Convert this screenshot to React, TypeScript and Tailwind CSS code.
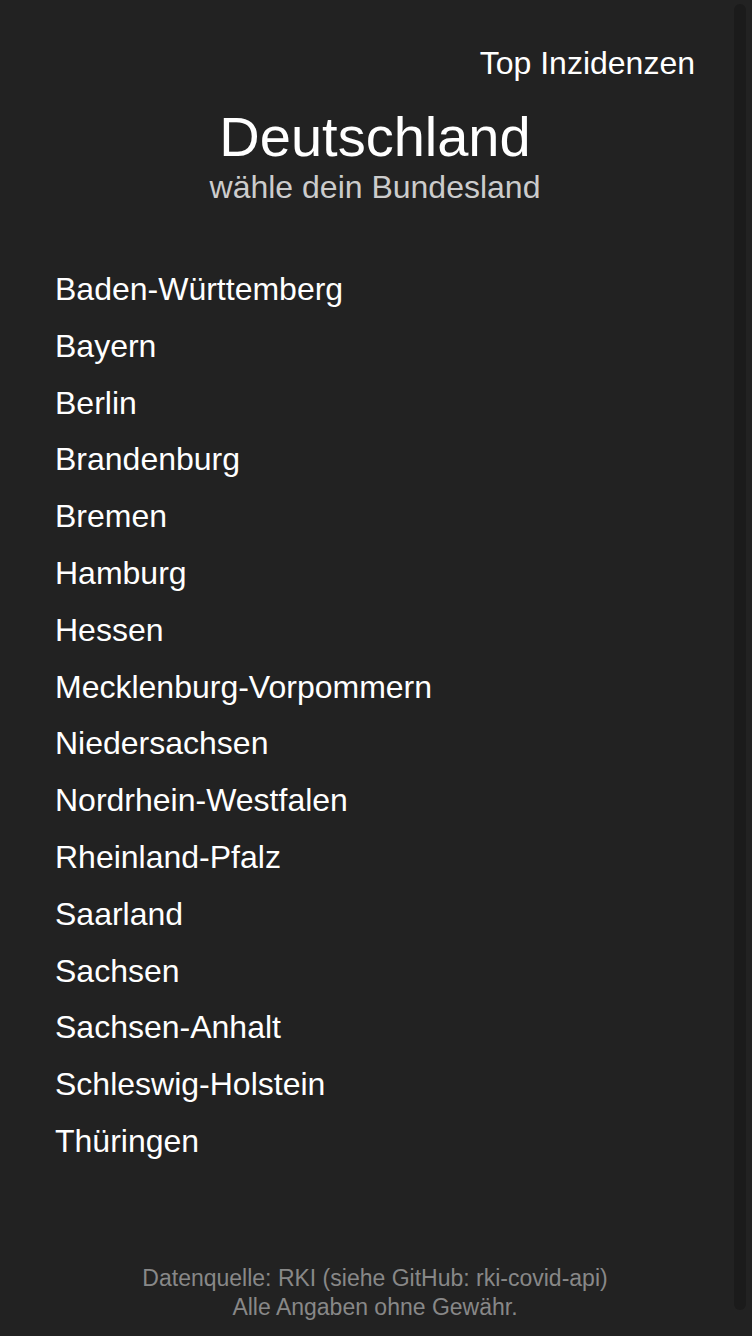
import React from "react";

const states = [
  "Baden-Württemberg",
  "Bayern",
  "Berlin",
  "Brandenburg",
  "Bremen",
  "Hamburg",
  "Hessen",
  "Mecklenburg-Vorpommern",
  "Niedersachsen",
  "Nordrhein-Westfalen",
  "Rheinland-Pfalz",
  "Saarland",
  "Sachsen",
  "Sachsen-Anhalt",
  "Schleswig-Holstein",
  "Thüringen",
];

export default function App() {
  return (
    <div className="relative h-[1336px] overflow-hidden bg-[#222222] flex flex-col text-white font-['Liberation_Sans',Arial,sans-serif]">
      <header className="pt-[45px] pr-[57px] flex justify-end">
        <a className="text-[32px] leading-[1.15] text-white">Top Inzidenzen</a>
      </header>
      <div className="mt-[23px] pr-[2px] text-center">
        <h1 className="text-[56px] leading-[1.15] text-white">Deutschland</h1>
        <p className="text-[32px] leading-[1.15] text-[#cccccc]">wähle dein Bundesland</p>
      </div>
      <ul className="mt-[65px] pl-[55px] flex flex-col gap-[20px]">
        {states.map((s) => (
          <li key={s} className="text-[32px] leading-[1.15] text-white">
            {s}
          </li>
        ))}
      </ul>
      <footer className="mt-auto pb-[14px] pr-[2px] text-center text-[23px] leading-[29px] text-[#888888]">
        <div>Datenquelle: RKI (siehe GitHub: rki-covid-api)</div>
        <div>Alle Angaben ohne Gewähr.</div>
      </footer>
      <div className="absolute left-[734px] top-[4px] w-[12px] h-[1306px] rounded-full bg-[#1b1b1b]" />
    </div>
  );
}
